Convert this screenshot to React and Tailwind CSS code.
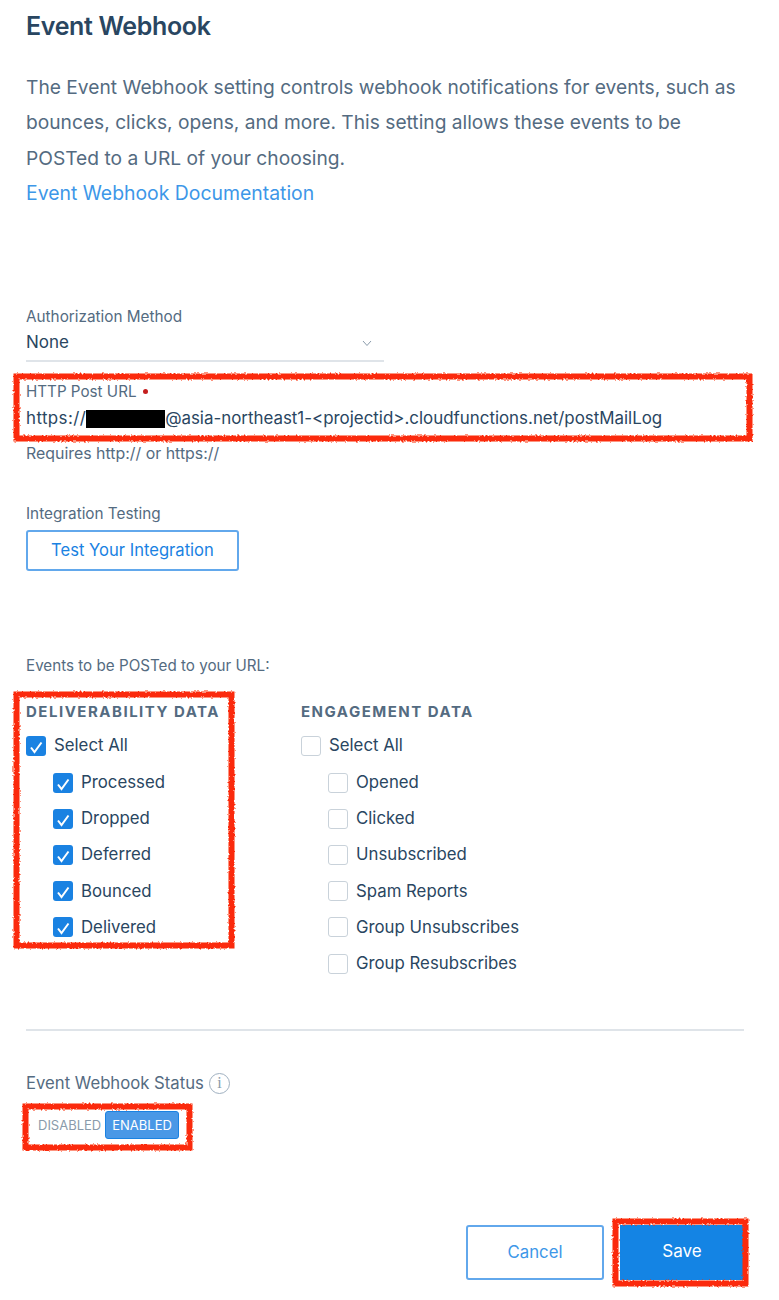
const font = "font-['Inter',sans-serif]";

const Check = ({ checked }) => (
  <span
    className={`w-[20px] h-[20px] rounded-[3px] flex items-center justify-center shrink-0 ${
      checked ? "bg-[#1a82e2]" : "bg-white border border-[#c9d2da]"
    }`}
  >
    {checked && (
      <svg width="16" height="16" viewBox="0 0 16 16" fill="none">
        <path d="M3 9.5 L6.5 14 L13.5 4.5" stroke="white" strokeWidth="2" />
      </svg>
    )}
  </span>
);

const CheckRow = ({ label, checked, className }) => (
  <div className={`flex items-center gap-[8px] h-[20px] ${className}`}>
    <Check checked={checked} />
    <span className="text-[16.8px] text-[#294661]">{label}</span>
  </div>
);

// hand drawn red marker around the annotated parts
const Marker = ({ id, className, w, h }) => (
  <svg className={`absolute pointer-events-none ${className}`} width={w + 8} height={h + 8}>
    <filter id={id}>
      <feTurbulence type="fractalNoise" baseFrequency="0.5" numOctaves="2" seed="3" />
      <feDisplacementMap in="SourceGraphic" scale="3" />
    </filter>
    <rect x="6.5" y="6.5" width={w - 5} height={h - 5} fill="none" stroke="#fb2a0c" strokeWidth="6" filter={`url(#${id})`} />
  </svg>
);

const Column = ({ title, items, checked, className }) => (
  <div className={className}>
    <div className="text-[15px] font-bold tracking-[1.5px] text-[#546b81] leading-[20px]">{title}</div>
    <CheckRow label="Select All" checked={checked} className="mt-[14px]" />
    <div className="ml-[27px] mt-[17px] flex flex-col gap-[16.2px]">
      {items.map((item) => (
        <CheckRow key={item} label={item} checked={checked} />
      ))}
    </div>
  </div>
);

export default function App() {
  return (
    <div className={`${font} relative bg-white w-[779px] h-[1300px] overflow-hidden px-[26px] pt-[12px]`}>
      <h1 className="text-[25px] leading-[28px] font-semibold tracking-[-0.35px] text-[#294661]">Event Webhook</h1>

      <p className="mt-[30px] text-[19.2px] leading-[35.3px] text-[#546b81] w-[725px]">
        The Event Webhook setting controls webhook notifications for events, such as bounces, clicks, opens, and more.
        This setting allows these events to be POSTed to a URL of your choosing.
      </p>
      <a className="block text-[19.4px] leading-[35.3px] text-[#3d97e8]">Event Webhook Documentation</a>

      <div className="mt-[95.5px] text-[15.3px] leading-[20px] text-[#546b81]">Authorization Method</div>
      <div className="w-[358px] h-[35px] border-b-2 border-[#dfe4e9] flex items-center justify-between pr-[12px] pb-[1px]">
        <span className="text-[17px] text-[#294661]">None</span>
        <svg width="10" height="10" viewBox="0 0 10 10" fill="none">
          <path d="M1 3 L5 7.5 L9 3" stroke="#8a9bab" strokeWidth="1" />
        </svg>
      </div>

      <div className="mt-[20px] flex items-center text-[15.2px] leading-[20px] text-[#546b81]">
        HTTP Post URL
        <span className="ml-[6px] w-[5px] h-[5px] rounded-full bg-[#c41e1e]" />
      </div>
      <div className="mt-[7px] h-[20px] flex items-center text-[16.9px] text-[#294661] whitespace-nowrap">
        <span className="tracking-[0.4px]">https://</span>
        <span className="inline-block w-[79px] h-[18px] bg-black" />
        @asia-northeast1-&lt;projectid&gt;.cloudfunctions.net/postMailLog
      </div>
      <div className="mt-[15px] text-[15.9px] leading-[20px] text-[#546b81]">Requires http:// or https://</div>

      <div className="mt-[40px] text-[15.3px] leading-[20px] text-[#546b81]">Integration Testing</div>
      <button className="mt-[6px] w-[213px] h-[41px] border-2 border-[#62a8ec] rounded-[3px] text-[16.6px] text-[#1a82e2]">
        Test Your Integration
      </button>

      <div className="mt-[85px] text-[15.2px] leading-[20px] text-[#546b81]">Events to be POSTed to your URL:</div>

      <div className="mt-[26px] flex">
        <Column
          title="DELIVERABILITY DATA"
          checked
          className="w-[275px]"
          items={["Processed", "Dropped", "Deferred", "Bounced", "Delivered"]}
        />
        <Column
          title="ENGAGEMENT DATA"
          items={["Opened", "Clicked", "Unsubscribed", "Spam Reports", "Group Unsubscribes", "Group Resubscribes"]}
        />
      </div>

      <div className="mt-[55px] w-[718px] border-t-2 border-[#dfe4e9]" />

      <div className="mt-[42px] flex items-center gap-[5px] text-[16.7px] leading-[20px] text-[#546b81]">
        Event Webhook Status
        <span className="w-[21px] h-[21px] rounded-full border border-[#9fb0c0] flex items-center justify-center font-['Liberation_Serif',serif] text-[16px] text-[#8a9bab]">
          i
        </span>
      </div>

      <div className="mt-[17px] ml-[12px] flex items-center text-[13px] leading-[26px]">
        <span className="text-[#8a9bab]">DISABLED</span>
        <span className="ml-[4px] px-[6px] bg-[#4a98e6] border border-[#1a82e2] rounded-[3px] text-white">ENABLED</span>
      </div>

      <div className="mt-[86px] flex justify-end gap-[16px] pr-[9px]">
        <button className="w-[138px] h-[55px] border-2 border-[#62a8ec] rounded-[3px] text-[16.8px] text-[#3d97e8]">Cancel</button>
        <button className="w-[124px] h-[55px] bg-[#1484e4] text-[17px] text-white">Save</button>
      </div>

      <Marker id="m1" w={738} h={67} className="left-[10px] top-[370px]" />
      <Marker id="m2" w={220} h={256} className="left-[10px] top-[688px]" />
      <Marker id="m3" w={169} h={46} className="left-[19px] top-[1100px]" />
      <Marker id="m4" w={135} h={67} className="left-[609px] top-[1215px]" />
    </div>
  );
}
